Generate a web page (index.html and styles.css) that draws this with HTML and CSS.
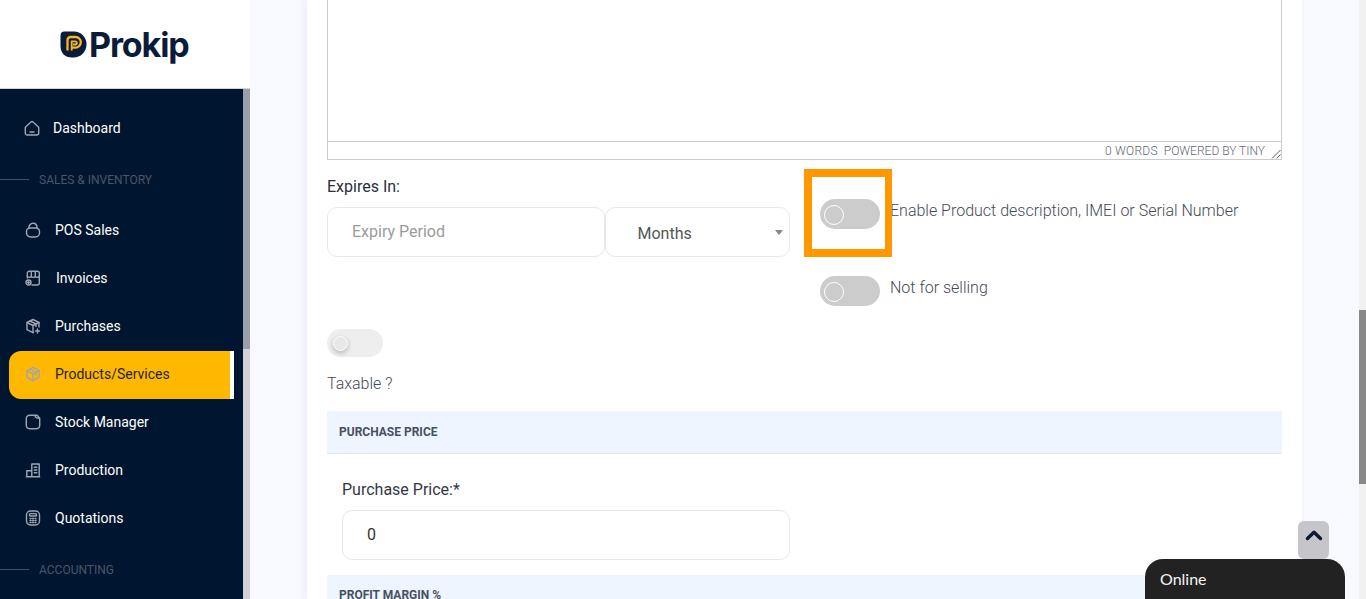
FILE: index.html
```html
<!DOCTYPE html>
<html lang="en">
<head>
<meta charset="utf-8">
<title>Prokip - Add Product</title>
<link rel="stylesheet" href="styles.css">
</head>
<body>
<div class="shell">
  <aside class="sidebar">
    <div class="brand">
      <svg class="brand-mark" viewBox="0 0 27 27" aria-hidden="true">
        <path d="M4.500.5H14a12.500 12.500 0 0 1 12.500 12.500v.5a13 13 0 0 1-13 13H12C5 26.500.5 22 .5 15V4.500a4 4 0 0 1 4-4Z" fill="#0b1b3a"/>
        <path d="M7.500 19.500V9a3 3 0 0 1 3-3h5a5.300 5.300 0 0 1 0 10.600H12" fill="none" stroke="#f5b921" stroke-width="2.300"/>
        <path d="M11.700 19.500V10.300h3.500a1.600 1.600 0 0 1 0 3.200H13" fill="none" stroke="#f5b921" stroke-width="1.800"/>
      </svg>
      <span class="brand-name">Prokip</span>
    </div>
    <div class="side-body">
      <nav class="nav">
        <a class="nav-item nav-first">
          <svg class="ico" viewBox="0 0 16 16"><path d="M1.300 7.300 7 2a1.500 1.500 0 0 1 2 0l5.700 5.300V13a2 2 0 0 1-2 2H3.300a2 2 0 0 1-2-2Z"/><path d="M6 12h4"/></svg>
          <span>Dashboard</span>
        </a>
        <div class="nav-section"><i></i><span>SALES &amp; INVENTORY</span></div>
        <a class="nav-item">
          <svg class="ico" viewBox="0 0 16 16"><path d="M3.800 6.500C3.800 3.500 5.500 1.300 8 1.300s4.200 2.200 4.200 5.200"/><path d="M1.500 9.500a3.500 3.500 0 0 1 3.500-3.500h6a3.500 3.500 0 0 1 3.500 3.500v1.500a4 4 0 0 1-4 4h-5a4 4 0 0 1-4-4Z"/></svg>
          <span>POS Sales</span>
        </a>
        <a class="nav-item nav-inv">
          <svg class="ico" viewBox="0 0 16 16"><path d="M2.300 8V3.300a2 2 0 0 1 2-2h8a2 2 0 0 1 2 2V13a2 2 0 0 1-2 2H7"/><path d="M2.300 6.500c1.500 1 3 1 4 0 1 1 3 1 4 0 1 1 2.500 1 4 0M6.300 1.500v5M10.300 1.500v5"/><circle cx="3.500" cy="12.500" r="2.500"/><path d="M3.500 11.500v2M2.500 12.500h2"/></svg>
          <span>Invoices</span>
        </a>
        <a class="nav-item">
          <svg class="ico" viewBox="0 0 16 16"><path d="M8.500 14.500 8 14.700l-6-3V4.500l6-3 6 3V9"/><path d="M2 4.500 8 7.500l6-3M8 7.500v7M5 3l6 3v2.500"/><path d="M12.500 11v4M10.500 13h4"/></svg>
          <span>Purchases</span>
        </a>
        <a class="nav-item is-active">
          <svg class="ico" viewBox="0 0 16 16"><path d="M8 1.300 14 4.700v6.600l-6 3.400-6-3.400V4.700Z"/><path d="M2 4.700 8 8l6-3.300M8 8v6.700M5 3l6 3.400v2.500"/></svg>
          <span>Products/Services</span>
        </a>
        <a class="nav-item">
          <svg class="ico" viewBox="0 0 16 16"><path d="M1.300 4.500a3.200 3.200 0 0 1 3.200-3.200h7.500l2.700 3v7a3.400 3.400 0 0 1-3.400 3.400h-6.600a3.400 3.400 0 0 1-3.400-3.400Z"/><path d="M10 1.600c.2 1.500 1.500 2.700 4.500 2.700"/></svg>
          <span>Stock Manager</span>
        </a>
        <a class="nav-item">
          <svg class="ico" viewBox="0 0 16 16"><path d="M1.300 14.700h13.400M1.800 14.700V8.800h5M6.800 14.700V2h7.400v12.700M9.300 5.300h2.500M9.300 8h2.500M9.300 10.700h2.500"/></svg>
          <span>Production</span>
        </a>
        <a class="nav-item">
          <svg class="ico" viewBox="0 0 16 16"><rect x="1.500" y="1" width="13" height="14" rx="4"/><rect x="4.500" y="3.600" width="7" height="2.400" rx=".8"/><path d="M5 8.500h1M7.500 8.500h1M10 8.500h1M5 10.500h1M7.500 10.500h1M10 10.500h1M5 12.500h1M7.500 12.500h1M10 12.500h1"/></svg>
          <span>Quotations</span>
        </a>
        <div class="nav-section"><i></i><span>ACCOUNTING</span></div>
      </nav>
      <div class="side-scroll"><div class="side-thumb"></div></div>
    </div>
  </aside>

  <main class="main">
    <section class="card">
      <div class="editor">
        <div class="editor-area"></div>
        <div class="editor-status">
          <span class="word-count">0 WORDS</span><span>POWERED BY TINY</span>
          <svg class="grip" viewBox="0 0 10 10"><path d="M9.500 1 1 9.500M9.500 5.500 5.500 9.500"/></svg>
        </div>
      </div>

      <div class="expiry">
        <div class="expiry-left">
          <label class="field-label">Expires In:</label>
          <div class="input-group">
            <div class="input input-period placeholder">Expiry Period</div>
            <div class="input input-unit"><span>Months</span><i class="caret"></i></div>
          </div>
        </div>
        <div class="expiry-right">
          <div class="switch-row">
            <span class="switch"><i></i></span>
            <span class="switch-text">Enable Product description, IMEI or Serial Number</span>
            <span class="highlight"></span>
          </div>
          <div class="switch-row second">
            <span class="switch"><i></i></span>
            <span class="switch-text">Not for selling</span>
          </div>
        </div>
      </div>

      <span class="switch-light"><i></i></span>
      <p class="taxable">Taxable ?</p>

      <h3 class="band">PURCHASE PRICE</h3>
      <div class="price">
        <label class="field-label dark">Purchase Price:*</label>
        <div class="input input-price">0</div>
      </div>
      <h3 class="band band-cut">PROFIT MARGIN %</h3>
    </section>
  </main>

  <div class="page-scroll"><div class="page-thumb"></div></div>
</div>

<button class="to-top" type="button" aria-label="Back to top">
  <svg viewBox="0 0 18 12"><path d="M2.500 9.500 9 3.200l6.500 6.300"/></svg>
</button>
<div class="chat">Online</div>
</body>
</html>
```
FILE: styles.css
```css
* { box-sizing: border-box; }
html, body { margin: 0; height: 599px; overflow: hidden; }
body { font-family: Roboto, "Liberation Sans", sans-serif; font-size: 16px; background: #f8f9ff; }

.shell { display: flex; height: 599px; overflow: hidden; }

/* Sidebar */
.sidebar { width: 250px; flex: none; display: flex; flex-direction: column; }
.brand { height: 89px; flex: none; background: #fff; border-bottom: 1px solid #d3d5d9; display: flex; align-items: flex-start; padding: 31px 0 0 60px; }
.brand-mark { width: 27px; height: 27px; flex: none; }
.brand-name { font-family: Inter, Lato, sans-serif; font-weight: 700; font-size: 34px; line-height: 28px; letter-spacing: -1.100px; color: #0b1b3a; margin-left: 2px; }
.side-body { flex: 1; display: flex; min-height: 0; }
.nav { width: 243px; background: #00152f; padding: 15px 0 0 0; overflow: hidden; }
.side-scroll { width: 7px; background: #d0d2d6; }
.side-thumb { height: 260px; background: #9a9fa9; }

.nav-item { display: flex; align-items: center; height: 48px; padding-left: 25px; color: #fff; font-size: 14px; font-weight: 400; margin-right: 9px; gap: 14px; }
.nav-first { gap: 13px; padding-left: 24px; }
.nav-inv { gap: 15px; }
.ico { width: 16px; height: 16px; flex: none; fill: none; stroke: #9ea5b1; stroke-width: 1.400; stroke-linecap: round; stroke-linejoin: round; }
.is-active { margin: 1px 9px -1px 9px; padding: 0 0 2px 16px; color: #1d2530; background: #ffb800; border-right: 4px solid #fff; border-radius: 12px 0 0 12px; }
.nav-section { height: 54px; padding-top: 1px; display: flex; align-items: center; gap: 10px; font-size: 12px; font-weight: 400; color: #4a5568; }
.nav-section i { width: 29px; height: 1px; background: #434e60; }

/* Main */
.main { flex: 1; min-width: 0; padding: 0 57px; }
.card { background: #fff; height: 599px; padding: 0 20px; box-shadow: -2px 0 6px rgba(40, 50, 110, .06); overflow: hidden; }

.editor { height: 160px; border: 1px solid #ccc; border-top: 0; display: flex; flex-direction: column; }
.editor-area { height: 142px; flex: none; border-bottom: 1px solid #ccc; }
.editor-status { flex: 1; display: flex; justify-content: flex-end; align-items: center; gap: 6px; font-size: 12px; font-weight: 300; color: #5f6673; padding-right: 16px; position: relative; }
.word-count { letter-spacing: .25px; }
.grip { position: absolute; right: 0; bottom: 0; width: 10px; height: 10px; fill: none; stroke: #555e6c; stroke-width: 1; }

.expiry { display: grid; grid-template-columns: 463px 1fr; height: 146px; }
.expiry-left { padding-top: 17px; }
.field-label { display: block; line-height: 20px; color: #2a2f3d; margin-bottom: 10px; }
.input-group { display: flex; }
.input { height: 50px; background: #fff; border: 1px solid #e8e8ec; border-radius: 10px; display: flex; align-items: center; }
.input-period { width: 278px; padding-left: 24px; padding-bottom: 2px; }
.placeholder { color: #9b9b9b; }
.input-unit { width: 185px; padding: 2px 0 0 31.500px; color: #555; position: relative; }
.caret { position: absolute; right: 6px; top: 22px; border: 4px solid transparent; border-top: 5px solid #888; border-bottom: 0; }

.expiry-right { padding: 39px 0 0 30px; }
.switch-row { display: flex; gap: 10px; align-items: flex-start; position: relative; }
.switch-row.second { margin-top: 47px; }
.switch { width: 60px; height: 30px; flex: none; background: #ccc; border-radius: 15px; padding: 6px 0 0 4px; }
.switch i { display: block; width: 20px; height: 20px; border: 1px solid #fff; border-radius: 50%; }
.switch-text { padding-top: 1px; line-height: 22px; color: #454a57; font-weight: 300; }
.highlight { position: absolute; left: -16px; top: -30px; width: 88px; height: 88px; border: 8px solid #ff9800; border-right-width: 7px; pointer-events: none; }

.switch-light { display: block; width: 56px; height: 28px; margin-top: 23px; background: #eee; border-radius: 14px; padding: 7px 0 0 6px; }
.switch-light i { display: block; width: 15px; height: 15px; background: #e8e8e8; border: 1px solid #fff; border-radius: 50%; box-shadow: 0 2px 5px rgba(0, 0, 0, .25); }
.taxable { margin: 17px 0 17px; line-height: 20px; color: #454a57; font-weight: 300; }

.band { margin: 0; height: 43px; padding: 14px 12px 0; background: #eef5ff; border-bottom: 1px solid #e4e9f1; font-size: 12px; line-height: 14px; font-weight: 700; color: #475061; }
.band-cut { height: 60px; padding-top: 13px; margin-top: 15px; }
.price { padding: 26px 0 0 15px; }
.field-label.dark { color: #333845; }
.input-price { width: 448px; padding: 0 0 2px 24px; color: #333; }

.page-scroll { width: 7px; flex: none; background: #f1f1f1; }
.page-thumb { height: 174px; margin-top: 310px; background: #888; }

/* Overlays */
.to-top { position: fixed; left: 1298px; top: 521px; width: 31px; height: 38px; padding: 0; border: 0; border-radius: 6px; background: #c6c6ca; }
.to-top svg { display: block; width: 18px; height: 12px; margin: 0 auto 11px; fill: none; stroke: #0d1733; stroke-width: 3.400; stroke-linecap: round; stroke-linejoin: round; }
.chat { position: fixed; left: 1145px; top: 559px; width: 200px; height: 40px; padding: 10px 0 0 15px; background: #222; color: #f4f4f4; font-family: Lato, sans-serif; font-size: 16px; line-height: 20px; border-radius: 18px 18px 0 0; }
```
